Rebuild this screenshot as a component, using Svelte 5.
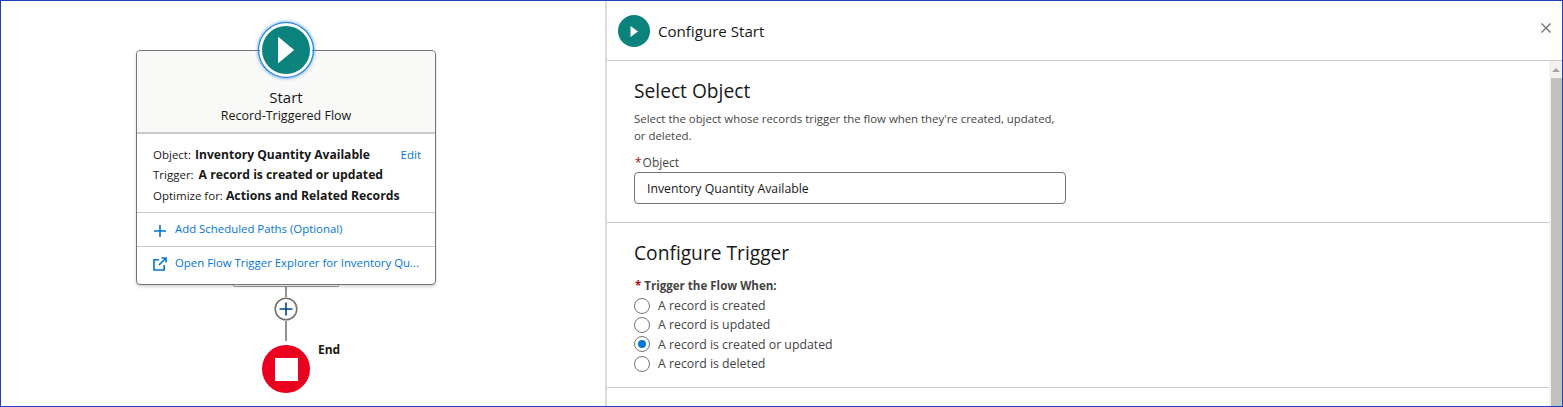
<script>
  const options = [
    { label: 'A record is created', checked: false },
    { label: 'A record is updated', checked: false },
    { label: 'A record is created or updated', checked: true },
    { label: 'A record is deleted', checked: false }
  ];
</script>

<div class="frame">
  <section class="canvas">
    <div class="card">
      <div class="start-icon">
        <svg viewBox="0 0 54 54" width="54" height="54">
          <circle cx="27" cy="27" r="26" fill="#fff" />
          <circle cx="27" cy="27" r="24" fill="#0b827c" />
          <path d="M19.5 14.5 L34.5 27 L19.5 39.5 Z" fill="#fff" stroke="#fff" stroke-width="1" stroke-linejoin="round" />
        </svg>
      </div>
      <div class="card-head">
        <div class="title">Start</div>
        <div class="sub">Record-Triggered Flow</div>
      </div>
      <div class="card-info">
        <div class="row"><span>Object:</span><b>Inventory Quantity Available</b><a class="edit">Edit</a></div>
        <div class="row"><span>Trigger:</span><b class="wide">A record is created or updated</b></div>
        <div class="row"><span>Optimize for:</span><b class="tight">Actions and Related Records</b></div>
      </div>
      <div class="card-link first">
        <svg class="add" viewBox="0 0 14 14" width="14" height="14"><path d="M7 1v12M1 7h12" stroke="#0176d3" stroke-width="1.6" fill="none" /></svg>
        <a>Add Scheduled Paths (Optional)</a>
      </div>
      <div class="card-link second">
        <svg class="ext" viewBox="0 0 14 14" width="14" height="14"><path d="M6 2.8H1v10.2h10.2V8M8.5 1h4.5v4.5M13 1L6 8" stroke="#0176d3" stroke-width="1.6" fill="none" /></svg>
        <a>Open Flow Trigger Explorer for Inventory Qu...</a>
      </div>
    </div>
    <div class="tab"></div>
    <div class="connector c1"></div>
    <div class="plus">
      <svg viewBox="0 0 24 24" width="24" height="24">
        <circle cx="12" cy="12" r="10.8" fill="#fff" stroke="#747474" stroke-width="1.6" />
        <path d="M12 5.5v13M5.5 12h13" stroke="#014486" stroke-width="1.6" fill="none" />
      </svg>
    </div>
    <div class="connector c2"></div>
    <div class="end-row">
      <div class="end-icon"><span></span></div>
      <div class="end-label">End</div>
    </div>
  </section>

  <section class="panel">
    <header class="panel-head">
      <div class="mini-icon">
        <svg viewBox="0 0 32 32" width="32" height="32">
          <circle cx="16" cy="16" r="16" fill="#0b827c" />
          <path d="M12.5 11 L20 16.5 L12.5 22 Z" fill="#fff" />
        </svg>
      </div>
      <h2>Configure Start</h2>
      <svg class="close" viewBox="0 0 12 12" width="12" height="12"><path d="M1.5 1.5l9 9M10.5 1.5l-9 9" stroke="#747474" stroke-width="1.4" fill="none" /></svg>
    </header>
    <div class="panel-body">
      <div class="content">
        <div class="block object">
          <h3>Select Object</h3>
          <p>Select the object whose records trigger the flow when they're created, updated, or deleted.</p>
          <label class="field-label"><i>*</i>Object</label>
          <div class="input">Inventory Quantity Available</div>
        </div>
        <div class="block trigger">
          <h3>Configure Trigger</h3>
          <div class="group-label"><i>*</i>Trigger the Flow When:</div>
          {#each options as o}
            <div class="radio">
              <span class="dot" class:on={o.checked}></span>
              <span>{o.label}</span>
            </div>
          {/each}
        </div>
      </div>
      <div class="scrollbar">
        <div class="arrow"></div>
        <div class="thumb"></div>
      </div>
    </div>
  </section>
</div>

<style>
  :global(body) { margin: 0; background: #fff; }
  .frame {
    box-sizing: border-box;
    width: 1563px;
    height: 407px;
    border: 1px solid #1f41bb;
    display: flex;
    overflow: hidden;
    font-family: "Open Sans", "Noto Sans", sans-serif;
    font-size: 12px;
    color: #181818;
    background: #fff;
  }
  .canvas {
    width: 604px;
    flex: none;
    box-sizing: border-box;
    padding: 49px 0 0 135px;
    display: flex;
    flex-direction: column;
    align-items: flex-start;
  }
  .card {
    position: relative;
    box-sizing: border-box;
    width: 300px;
    height: 235px;
    border: 1px solid #747474;
    border-radius: 4px;
    background: #fff;
    box-shadow: 0 2px 3px rgba(0, 0, 0, .16);
    flex: none;
  }
  .start-icon {
    position: absolute;
    left: 122px;
    top: -28px;
    width: 54px;
    height: 54px;
    border-radius: 50%;
    box-shadow: 0 0 0 1px #1b7fd8, 0 0 3px 2px rgba(27, 127, 216, .5);
  }
  .start-icon svg { display: block; }
  .card-head {
    height: 83px;
    box-sizing: border-box;
    padding-top: 37px;
    background: #f9f9f7;
    border-bottom: 2px solid #c9c9c9;
    border-radius: 4px 4px 0 0;
    text-align: center;
  }
  .title { font-size: 15px; line-height: 19px; }
  .sub { font-size: 12.5px; line-height: 18px; }
  .card-info {
    height: 79px;
    box-sizing: border-box;
    padding: 10px 16px 0;
    border-bottom: 1px solid #c9c9c9;
  }
  .row {
    display: flex;
    height: 20.5px;
    align-items: center;
    gap: 4px;
    white-space: nowrap;
    font-size: 11.5px;
  }
  .row b { font-weight: 700; font-size: 12.1px; }
  .row b.wide { margin-left: 1px; font-size: 12.2px; }
  .row b.tight { margin-left: -1px; font-size: 12.25px; }
  .edit { margin-left: auto; color: #0176d3; margin-right: -2px; }
  .card-link {
    display: flex;
    align-items: center;
    gap: 8px;
    padding-left: 16px;
    color: #0176d3;
    font-size: 11.4px;
    white-space: nowrap;
    box-sizing: border-box;
  }
  .card-link.first { height: 34px; padding-bottom: 2px; border-bottom: 1px solid #c9c9c9; }
  .card-link.second { height: 35px; padding-bottom: 4px; }
  .add { margin-top: 5px; }
  .ext { margin-top: 3px; }
  .tab {
    box-sizing: border-box;
    width: 106px;
    height: 2px;
    margin-left: 97px;
    border: 1px solid #a0a0a0;
    border-top: 0;
    border-radius: 0 0 4px 4px;
    flex: none;
  }
  .connector { width: 2px; background: #919191; margin-left: 149px; flex: none; }
  .c1 { height: 10px; }
  .plus { margin-left: 138px; height: 24px; flex: none; }
  .plus svg { display: block; }
  .c2 { height: 20px; }
  .end-row {
    margin: 4px 0 0 126px;
    display: flex;
  }
  .end-icon {
    width: 48px;
    height: 48px;
    border-radius: 50%;
    background: #ea001e;
    display: flex;
    align-items: center;
    justify-content: center;
  }
  .end-icon span { width: 23px; height: 23px; background: #fff; }
  .end-label { margin: -3px 0 0 8px; font-weight: 700; font-size: 12px; line-height: 16px; }
  .panel {
    flex: 1;
    min-width: 0;
    border-left: 2px solid #dcdcdc;
    display: flex;
    flex-direction: column;
  }
  .panel-head {
    height: 60px;
    flex: none;
    box-sizing: border-box;
    border-bottom: 1px solid #c9c9c9;
    display: flex;
    align-items: center;
    padding: 1px 10px 0 11px;
    gap: 8px;
  }
  .mini-icon { height: 32px; }
  .mini-icon svg { display: block; }
  h2 { margin: 0; font-size: 15.1px; font-weight: 400; flex: 1; }
  .close { margin-top: -6px; }
  .panel-body { flex: 1; display: flex; min-height: 0; }
  .content { flex: 1; min-width: 0; }
  .block { border-bottom: 1px solid #c9c9c9; padding-left: 27px; box-sizing: border-box; }
  .object { height: 162px; padding-top: 16px; }
  .trigger { height: 165px; padding-top: 16px; }
  h3 { margin: 0; font-size: 19.2px; font-weight: 400; line-height: 27px; }
  p {
    margin: 6px 0 0;
    width: 424px;
    font-size: 11.4px;
    line-height: 17px;
    color: #444;
  }
  .field-label { display: block; margin-top: 11px; font-size: 12px; line-height: 16px; color: #444; }
  i { color: #ba0517; font-style: normal; margin: 0 3px 0 1px; }
  .field-label i { margin-right: 1px; }
  .input {
    box-sizing: border-box;
    width: 432px;
    height: 32px;
    margin-top: 1px;
    border: 1px solid #747474;
    border-radius: 4px;
    padding-left: 12px;
    line-height: 31px;
    font-size: 12.3px;
  }
  .group-label { margin: 12px 0 2px; font-size: 11.55px; font-weight: 700; color: #444; line-height: 16px; }
  .radio {
    display: flex;
    align-items: center;
    gap: 8px;
    height: 19.3px;
    font-size: 12.3px;
    color: #444;
  }
  .dot {
    box-sizing: border-box;
    width: 16px;
    height: 16px;
    border: 1px solid #747474;
    border-radius: 50%;
    background: #fff;
    display: flex;
    align-items: center;
    justify-content: center;
  }
  .dot.on::after {
    content: "";
    width: 8px;
    height: 8px;
    border-radius: 50%;
    background: #0176d3;
  }
  .scrollbar {
    width: 13px;
    flex: none;
    background: #f1f1f1;
    display: flex;
    flex-direction: column;
  }
  .arrow {
    height: 17px;
    flex: none;
    display: flex;
    align-items: center;
    justify-content: center;
  }
  .arrow::after {
    content: "";
    border-left: 4px solid transparent;
    border-right: 4px solid transparent;
    border-bottom: 4px solid #a3a3a3;
  }
  .thumb { flex: 1; margin-left: 2px; background: #c1c1c1; }
</style>
